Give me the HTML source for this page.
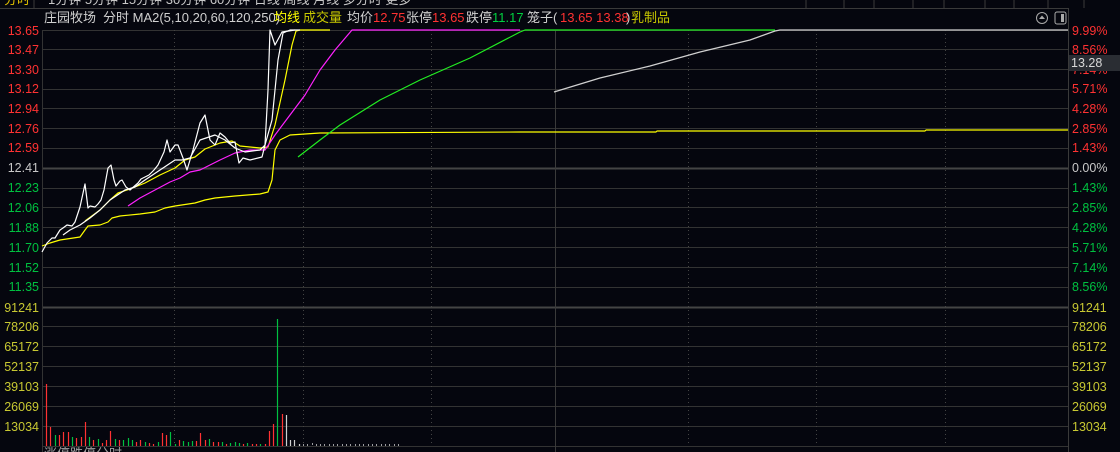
<!DOCTYPE html>
<html><head><meta charset="utf-8"><style>
html,body{margin:0;padding:0;background:#05060e;width:1120px;height:452px;overflow:hidden}
svg{display:block;font-family:"Liberation Sans","Noto Sans CJK SC",sans-serif}
</style></head><body>
<svg width="1120" height="452" viewBox="0 0 1120 452" xmlns="http://www.w3.org/2000/svg">
<rect width="1120" height="452" fill="#05060e"/>
<!-- top tab strip -->
<g font-size="13" fill="#c8c8c8">
<text x="4" y="4" fill="#e0c000">分时</text>
<text x="48" y="4">1分钟 5分钟 15分钟 30分钟 60分钟 日线 周线 月线 多分时 更多</text>
</g>
<line x1="0" y1="8.5" x2="1068" y2="8.5" stroke="#3a3a3a"/>
<g stroke="#3a3a3a"><line x1="34" y1="0" x2="34" y2="8"/>
<line x1="806" y1="0" x2="806" y2="8"/><line x1="844" y1="0" x2="844" y2="8"/><line x1="874" y1="0" x2="874" y2="8"/><line x1="913" y1="0" x2="913" y2="8"/><line x1="944" y1="0" x2="944" y2="8"/><line x1="985" y1="0" x2="985" y2="8"/><line x1="1014" y1="0" x2="1014" y2="8"/><line x1="1048" y1="0" x2="1048" y2="8"/><line x1="1084" y1="0" x2="1084" y2="8"/></g>
<!-- header -->
<g font-size="13">
<text x="44" y="22" fill="#d0d0d0">庄园牧场</text>
<text x="103" y="22" fill="#d0d0d0">分时 MA2(5,10,20,60,120,250)</text>
<text x="274" y="22" fill="#ffff00">均线</text>
<text x="303" y="22" fill="#c8c800">成交量</text>
<text x="347" y="22" fill="#d0d0d0">均价</text>
<text x="373" y="22" fill="#ff3232">12.75</text>
<text x="406" y="22" fill="#d0d0d0">张停</text>
<text x="432" y="22" fill="#ff3232">13.65</text>
<text x="466" y="22" fill="#d0d0d0">跌停</text>
<text x="492" y="22" fill="#00d040">11.17</text>
<text x="527" y="22" fill="#d0d0d0">笼子(</text>
<text x="560" y="22" fill="#ff3232">13.65 13.38</text>
<text x="626" y="22" fill="#d0d0d0">)</text>
<text x="631" y="22" fill="#c8c800">乳制品</text>
</g>
<circle cx="1042" cy="18" r="5.5" fill="none" stroke="#aaa"/><path d="M1039 19 L1042 15.5 L1045 19 Z" fill="#aaa"/>
<rect x="1055" y="12" width="11" height="12" rx="2" fill="none" stroke="#aaa"/><rect x="1061" y="14" width="3" height="8" fill="#aaa"/>
<!-- grid -->
<g stroke="#333" stroke-width="1">
<line x1="42" y1="30.5" x2="1068" y2="30.5"/>
<line x1="42" y1="49.5" x2="1068" y2="49.5"/>
<line x1="42" y1="69.5" x2="1068" y2="69.5"/>
<line x1="42" y1="89.5" x2="1068" y2="89.5"/>
<line x1="42" y1="108.5" x2="1068" y2="108.5"/>
<line x1="42" y1="128.5" x2="1068" y2="128.5"/>
<line x1="42" y1="148.5" x2="1068" y2="148.5"/>
<line x1="42" y1="168.5" x2="1068" y2="168.5" stroke="#444" stroke-width="2"/>
<line x1="42" y1="188.5" x2="1068" y2="188.5"/>
<line x1="42" y1="207.5" x2="1068" y2="207.5"/>
<line x1="42" y1="227.5" x2="1068" y2="227.5"/>
<line x1="42" y1="247.5" x2="1068" y2="247.5"/>
<line x1="42" y1="267.5" x2="1068" y2="267.5"/>
<line x1="42" y1="287.5" x2="1068" y2="287.5"/>
<line x1="42" y1="307.5" x2="1068" y2="307.5" stroke="#444" stroke-width="2"/>
<line x1="42" y1="326.5" x2="1068" y2="326.5"/>
<line x1="42" y1="346.5" x2="1068" y2="346.5"/>
<line x1="42" y1="366.5" x2="1068" y2="366.5"/>
<line x1="42" y1="386.5" x2="1068" y2="386.5"/>
<line x1="42" y1="406.5" x2="1068" y2="406.5"/>
<line x1="42" y1="426.5" x2="1068" y2="426.5"/>
<line x1="42" y1="446.5" x2="1068" y2="446.5"/>
<line x1="42.5" y1="30" x2="42.5" y2="452"/>
<line x1="555.5" y1="30" x2="555.5" y2="452" stroke="#3a3a3a"/>
<line x1="1068.5" y1="8" x2="1068.5" y2="452" stroke="#3a3a3a"/>
</g>
<g stroke="#444" stroke-dasharray="1,3">
<line x1="174.5" y1="30" x2="174.5" y2="446"/><line x1="303.5" y1="30" x2="303.5" y2="446"/><line x1="431.5" y1="30" x2="431.5" y2="446"/><line x1="688.5" y1="30" x2="688.5" y2="446"/><line x1="816.5" y1="30" x2="816.5" y2="446"/><line x1="945.5" y1="30" x2="945.5" y2="446"/>
</g>
<!-- left labels -->
<g font-size="12.5" text-anchor="end">
<g fill="#ff3232"><text x="39" y="35">13.65</text><text x="39" y="54">13.47</text><text x="39" y="74">13.30</text><text x="39" y="93">13.12</text><text x="39" y="113">12.94</text><text x="39" y="133">12.76</text><text x="39" y="152">12.59</text></g>
<text x="39" y="172" fill="#c8c8c8">12.41</text>
<g fill="#00c040"><text x="39" y="192">12.23</text><text x="39" y="212">12.06</text><text x="39" y="232">11.88</text><text x="39" y="252">11.70</text><text x="39" y="272">11.52</text><text x="39" y="291">11.35</text></g>
<g fill="#c8c832"><text x="39" y="312">91241</text><text x="39" y="331">78206</text><text x="39" y="351">65172</text><text x="39" y="371">52137</text><text x="39" y="391">39103</text><text x="39" y="411">26069</text><text x="39" y="431">13034</text></g>
</g>
<!-- right labels -->
<g font-size="12.5">
<g fill="#ff3232"><text x="1072" y="35">9.99%</text><text x="1072" y="54">8.56%</text><text x="1072" y="74">7.14%</text><text x="1072" y="93">5.71%</text><text x="1072" y="113">4.28%</text><text x="1072" y="133">2.85%</text><text x="1072" y="152">1.43%</text></g>
<text x="1072" y="172" fill="#c8c8c8">0.00%</text>
<g fill="#00c040"><text x="1072" y="192">1.43%</text><text x="1072" y="212">2.85%</text><text x="1072" y="232">4.28%</text><text x="1072" y="252">5.71%</text><text x="1072" y="272">7.14%</text><text x="1072" y="291">8.56%</text></g>
<g fill="#c8c832"><text x="1072" y="312">91241</text><text x="1072" y="331">78206</text><text x="1072" y="351">65172</text><text x="1072" y="371">52137</text><text x="1072" y="391">39103</text><text x="1072" y="411">26069</text><text x="1072" y="431">13034</text></g>
</g>
<rect x="1069" y="55" width="51" height="16" fill="#2a2d33"/>
<text x="1071" y="67" font-size="12.5" fill="#d8d8d8">13.28</text>
<!-- lines -->
<g fill="none" stroke-width="1.2" stroke-linejoin="round">
<polyline stroke="#ffff00" points="42,246 50,243 60,240 80,237 85,230 88,226 100,225 108,222 112,218 120,216 140,214 155,212 165,208 175,206 195,203 205,200 215,198 235,196 260,194 268,192 272,180 275,150 280,140 290,135 320,133 520,132 656,132 657,131 925,131 926,130 1068,130"/>
<polyline stroke="#ffff00" points="85,221 100,210 110,200 118,193 130,189 145,183 160,175 175,168 185,160 195,157 205,149 220,143 232,141 240,146 260,148 268,147 275,125 285,80 292,45 296,31 300,30 330,30"/>
<polyline stroke="#ff22ff" points="128,206 140,198 155,190 170,182 180,178 190,172 200,170 210,165 220,160 235,153 250,150 265,150 275,135 290,115 305,95 320,70 335,50 352,30 520,30"/>
<polyline stroke="#22ee22" points="298,157 320,140 340,125 380,100 420,80 470,58 520,32 525,30 775,30"/>
<polyline stroke="#d0d0d0" points="554,92 600,78 650,66 700,52 750,40 775,31 780,30 1068,30"/>
<polyline stroke="#ffffff" points="63,235 70,230 80,225 90,218 100,210 110,200 125,190 135,187 145,180 160,170 175,160 182,160 190,158 200,140 215,135 225,140 235,148 245,152 260,150 265,145 272,120 278,60 283,33 290,30 300,30"/>
<polyline stroke="#ffffff" points="42,252 47,243 52,238 55,238 60,230 63,228 67,225 72,226 75,222 80,207 85,184 88,208 90,206 95,207 98,204 101,200 104,190 108,168 111,165 114,180 116,186 120,181 122,180 126,187 130,190 138,183 141,179 149,175 154,170 158,165 164,152 167,140 170,152 175,145 178,145 183,158 187,170 193,150 200,123 205,115 210,140 215,145 220,133 225,137 230,143 235,142 239,163 243,158 250,160 262,157 265,145 268,90 270,30 275,45 282,32 295,30"/>
</g>
<!-- volume bars -->
<g stroke-width="1.2">
<g stroke="#ff3232">
<line x1="46.5" y1="384" x2="46.5" y2="446"/><line x1="50.5" y1="427" x2="50.5" y2="446"/><line x1="59.5" y1="435" x2="59.5" y2="446"/><line x1="63.5" y1="432" x2="63.5" y2="446"/><line x1="68.5" y1="432" x2="68.5" y2="446"/><line x1="76.5" y1="438" x2="76.5" y2="446"/><line x1="81.5" y1="437" x2="81.5" y2="446"/><line x1="85.5" y1="422" x2="85.5" y2="446"/><line x1="93.5" y1="440" x2="93.5" y2="446"/><line x1="102.5" y1="443" x2="102.5" y2="446"/><line x1="106.5" y1="440" x2="106.5" y2="446"/><line x1="110.5" y1="431" x2="110.5" y2="446"/><line x1="119.5" y1="440" x2="119.5" y2="446"/><line x1="136.5" y1="442" x2="136.5" y2="446"/><line x1="140.5" y1="440" x2="140.5" y2="446"/><line x1="149.5" y1="443" x2="149.5" y2="446"/><line x1="153.5" y1="444" x2="153.5" y2="446"/><line x1="162.5" y1="433" x2="162.5" y2="446"/><line x1="166.5" y1="435" x2="166.5" y2="446"/><line x1="179.5" y1="440" x2="179.5" y2="446"/><line x1="196.5" y1="441" x2="196.5" y2="446"/><line x1="200.5" y1="433" x2="200.5" y2="446"/><line x1="205.5" y1="440" x2="205.5" y2="446"/><line x1="213.5" y1="442" x2="213.5" y2="446"/><line x1="218.5" y1="442" x2="218.5" y2="446"/><line x1="226.5" y1="444" x2="226.5" y2="446"/><line x1="243.5" y1="444" x2="243.5" y2="446"/><line x1="252.5" y1="444" x2="252.5" y2="446"/><line x1="256.5" y1="444" x2="256.5" y2="446"/><line x1="265.5" y1="444" x2="265.5" y2="446"/><line x1="269.5" y1="431" x2="269.5" y2="446"/><line x1="273.5" y1="424" x2="273.5" y2="446"/><line x1="282.5" y1="414" x2="282.5" y2="446"/>
</g>
<g stroke="#00c040">
<line x1="55.5" y1="435" x2="55.5" y2="446"/><line x1="72.5" y1="437" x2="72.5" y2="446"/><line x1="89.5" y1="437" x2="89.5" y2="446"/><line x1="98.5" y1="439" x2="98.5" y2="446"/><line x1="115.5" y1="439" x2="115.5" y2="446"/><line x1="123.5" y1="440" x2="123.5" y2="446"/><line x1="128.5" y1="438" x2="128.5" y2="446"/><line x1="132.5" y1="440" x2="132.5" y2="446"/><line x1="145.5" y1="442" x2="145.5" y2="446"/><line x1="158.5" y1="442" x2="158.5" y2="446"/><line x1="170.5" y1="432" x2="170.5" y2="446"/><line x1="175.5" y1="444" x2="175.5" y2="446"/><line x1="183.5" y1="441" x2="183.5" y2="446"/><line x1="188.5" y1="442" x2="188.5" y2="446"/><line x1="192.5" y1="441" x2="192.5" y2="446"/><line x1="209.5" y1="439" x2="209.5" y2="446"/><line x1="222.5" y1="442" x2="222.5" y2="446"/><line x1="230.5" y1="443" x2="230.5" y2="446"/><line x1="235.5" y1="442" x2="235.5" y2="446"/><line x1="239.5" y1="443" x2="239.5" y2="446"/><line x1="247.5" y1="443" x2="247.5" y2="446"/><line x1="260.5" y1="444" x2="260.5" y2="446"/><line x1="277.5" y1="319" x2="277.5" y2="446"/>
</g>
<g stroke="#d0d0d0">
<line x1="286.5" y1="415" x2="286.5" y2="446"/><line x1="290.5" y1="440" x2="290.5" y2="446"/><line x1="294.5" y1="440" x2="294.5" y2="446"/><line x1="299.5" y1="444" x2="299.5" y2="446"/>
<path d="M303 445h1M307 445h1M312 444h1M316 445h1M320 445h1M324 445h1M329 445h1M333 445h1M337 445h1M342 445h1M346 445h1M350 445h1M355 445h1M359 445h1M363 445h1M368 445h1M372 445h1M376 445h1M381 445h1M385 445h1M389 445h1M394 445h1M398 445h1" stroke-width="1.5"/>
</g>
</g>
<text x="44" y="458" font-size="13" fill="#a0a0a0">涨停跌停分时</text>
</svg>
</body></html>
